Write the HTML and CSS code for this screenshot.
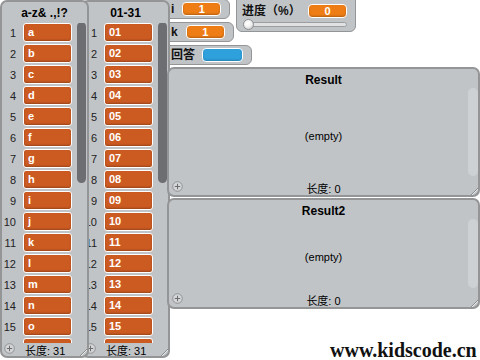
FILE: index.html
```html
<!DOCTYPE html>
<html lang="zh">
<head>
<meta charset="utf-8">
<title>Stage</title>
<link rel="stylesheet" href="styles.css">
</head>
<body>
<div class="stage">

  <div class="vars">
    <div class="var v-i"><span class="vlabel">i</span><span class="vval orange">1</span></div>
    <div class="var v-k"><span class="vlabel">k</span><span class="vval orange">1</span></div>
    <div class="var v-ans"><span class="vlabel">回答</span><span class="vval blue"></span></div>
  </div>

  <div class="slider-mon">
    <div class="slider-top"><span class="vlabel">进度（%）</span><span class="vval orange">0</span></div>
    <div class="track"><span class="knob"></span></div>
  </div>

  <div class="list l2">
    <div class="list-title">01-31</div>
    <div class="list-body">
      <div class="rows">
        <div class="row"><span class="idx">1</span><span class="item">01</span></div>
        <div class="row"><span class="idx">2</span><span class="item">02</span></div>
        <div class="row"><span class="idx">3</span><span class="item">03</span></div>
        <div class="row"><span class="idx">4</span><span class="item">04</span></div>
        <div class="row"><span class="idx">5</span><span class="item">05</span></div>
        <div class="row"><span class="idx">6</span><span class="item">06</span></div>
        <div class="row"><span class="idx">7</span><span class="item">07</span></div>
        <div class="row"><span class="idx">8</span><span class="item">08</span></div>
        <div class="row"><span class="idx">9</span><span class="item">09</span></div>
        <div class="row"><span class="idx">10</span><span class="item">10</span></div>
        <div class="row"><span class="idx">11</span><span class="item">11</span></div>
        <div class="row"><span class="idx">12</span><span class="item">12</span></div>
        <div class="row"><span class="idx">13</span><span class="item">13</span></div>
        <div class="row"><span class="idx">14</span><span class="item">14</span></div>
        <div class="row"><span class="idx">15</span><span class="item">15</span></div>
        <div class="row"><span class="idx"></span><span class="item"></span></div>
      </div>
      <div class="scroll dark"></div>
    </div>
    <div class="list-foot">
      <span class="add"><svg width="11" height="11" viewBox="0 0 11 11"><circle cx="5.5" cy="5.5" r="4.8" fill="#d3d5d7" stroke="#8f9193" stroke-width="1"/><path d="M5.5 2.8v5.4M2.8 5.5h5.4" stroke="#6a6c6e" stroke-width="1"/></svg></span>
      <span class="len">长度: 31</span>
      <span class="grip"><svg width="10" height="10" viewBox="0 0 10 10"><path d="M10 1L1 10M10 5L5 10M10 8L8 10" stroke="#8a8c8e" stroke-width="1"/><path d="M10 2L2 10M10 6L6 10" stroke="#e8e9ea" stroke-width="1"/></svg></span>
    </div>
  </div>

  <div class="list l1">
    <div class="list-title">a-z&amp; .,!?</div>
    <div class="list-body">
      <div class="rows">
        <div class="row"><span class="idx">1</span><span class="item">a</span></div>
        <div class="row"><span class="idx">2</span><span class="item">b</span></div>
        <div class="row"><span class="idx">3</span><span class="item">c</span></div>
        <div class="row"><span class="idx">4</span><span class="item">d</span></div>
        <div class="row"><span class="idx">5</span><span class="item">e</span></div>
        <div class="row"><span class="idx">6</span><span class="item">f</span></div>
        <div class="row"><span class="idx">7</span><span class="item">g</span></div>
        <div class="row"><span class="idx">8</span><span class="item">h</span></div>
        <div class="row"><span class="idx">9</span><span class="item">i</span></div>
        <div class="row"><span class="idx">10</span><span class="item">j</span></div>
        <div class="row"><span class="idx">11</span><span class="item">k</span></div>
        <div class="row"><span class="idx">12</span><span class="item">l</span></div>
        <div class="row"><span class="idx">13</span><span class="item">m</span></div>
        <div class="row"><span class="idx">14</span><span class="item">n</span></div>
        <div class="row"><span class="idx">15</span><span class="item">o</span></div>
        <div class="row"><span class="idx"></span><span class="item"></span></div>
      </div>
      <div class="scroll dark"></div>
    </div>
    <div class="list-foot">
      <span class="add"><svg width="11" height="11" viewBox="0 0 11 11"><circle cx="5.5" cy="5.5" r="4.8" fill="#d3d5d7" stroke="#8f9193" stroke-width="1"/><path d="M5.5 2.8v5.4M2.8 5.5h5.4" stroke="#6a6c6e" stroke-width="1"/></svg></span>
      <span class="len">长度: 31</span>
      <span class="grip"><svg width="10" height="10" viewBox="0 0 10 10"><path d="M10 1L1 10M10 5L5 10M10 8L8 10" stroke="#8a8c8e" stroke-width="1"/><path d="M10 2L2 10M10 6L6 10" stroke="#e8e9ea" stroke-width="1"/></svg></span>
    </div>
  </div>

  <div class="list rlist r1">
    <div class="list-title rtitle">Result</div>
    <div class="rbody">
      <div class="empty">(empty)</div>
      <div class="scroll light"></div>
    </div>
    <div class="list-foot rfoot">
      <span class="add"><svg width="11" height="11" viewBox="0 0 11 11"><circle cx="5.5" cy="5.5" r="4.8" fill="#d3d5d7" stroke="#8f9193" stroke-width="1"/><path d="M5.5 2.8v5.4M2.8 5.5h5.4" stroke="#6a6c6e" stroke-width="1"/></svg></span>
      <span class="len">长度: 0</span>
      <span class="grip"><svg width="10" height="10" viewBox="0 0 10 10"><path d="M10 1L1 10M10 5L5 10M10 8L8 10" stroke="#8a8c8e" stroke-width="1"/><path d="M10 2L2 10M10 6L6 10" stroke="#e8e9ea" stroke-width="1"/></svg></span>
    </div>
  </div>

  <div class="list rlist r2">
    <div class="list-title rtitle">Result2</div>
    <div class="rbody">
      <div class="empty">(empty)</div>
      <div class="scroll light"></div>
    </div>
    <div class="list-foot rfoot">
      <span class="add"><svg width="11" height="11" viewBox="0 0 11 11"><circle cx="5.5" cy="5.5" r="4.8" fill="#d3d5d7" stroke="#8f9193" stroke-width="1"/><path d="M5.5 2.8v5.4M2.8 5.5h5.4" stroke="#6a6c6e" stroke-width="1"/></svg></span>
      <span class="len">长度: 0</span>
      <span class="grip"><svg width="10" height="10" viewBox="0 0 10 10"><path d="M10 1L1 10M10 5L5 10M10 8L8 10" stroke="#8a8c8e" stroke-width="1"/><path d="M10 2L2 10M10 6L6 10" stroke="#e8e9ea" stroke-width="1"/></svg></span>
    </div>
  </div>

  <div class="watermark">www.kidscode.cn</div>
</div>
</body>
</html>
```

FILE: styles.css
```css
* { box-sizing: border-box; }
html, body { margin: 0; padding: 0; background: #ffffff; }
body {
  font-family: "Liberation Sans", Arial, "Noto Sans CJK SC", sans-serif;
  color: #000;
}
.stage {
  position: relative;
  width: 480px;
  height: 360px;
  overflow: hidden;
  background: #ffffff;
}

/* ---------- variable monitors ---------- */
.vars {
  position: absolute;
  left: 160px;
  top: 0;
  display: flex;
  flex-direction: column;
  align-items: flex-start;
  gap: 3px;
  z-index: 1;
}
.var {
  display: flex;
  align-items: center;
  height: 20px;
  padding: 0 8px 0 10px;
  background: #c1c4c7;
  border: 1px solid #949596;
  border-radius: 0 6px 6px 0;
}
.v-i { margin-top: -1px; }
.vlabel {
  font-family: "Liberation Sans", Arial, "Noto Sans CJK SC", sans-serif;
  font-weight: bold;
  font-size: 12px;
  line-height: 14px;
  color: #111;
}
.v-i .vlabel { margin-right: 8px; }
.v-k .vlabel { margin-right: 8px; }
.v-ans .vlabel { margin-right: 7px; }
.vval {
  display: block;
  width: 39px;
  height: 14px;
  border: 1px solid #ffffff;
  border-radius: 4px;
  color: #fff;
  font-weight: bold;
  font-size: 11px;
  line-height: 12px;
  text-align: center;
}
.orange { background: #ee7d16; box-shadow: inset 0 -1px 2px rgba(0,0,0,0.25); }
.blue { background: #2ea0dc; width: 41px; box-shadow: inset 0 -1px 2px rgba(0,0,0,0.2); }

.slider-mon {
  position: absolute;
  left: 236px;
  top: -1px;
  width: 120px;
  height: 33px;
  padding: 4px 8px 0 5px;
  background: #c1c4c7;
  border: 1px solid #949596;
  border-radius: 0 0 6px 6px;
  display: flex;
  flex-direction: column;
  gap: 4px;
  z-index: 1;
}
.slider-top {
  display: flex;
  align-items: center;
  justify-content: space-between;
}
.track {
  position: relative;
  height: 5px;
  margin: 0 0 0 2px;
  background: #dfe1e3;
  border: 1px solid #9c9ea0;
  border-radius: 3px;
}
.knob {
  position: absolute;
  left: -2px;
  top: -4px;
  width: 11px;
  height: 11px;
  border-radius: 50%;
  border: 1px solid #8d8f91;
  background: radial-gradient(circle at 40% 35%, #ffffff 0%, #f2f2f2 45%, #b9bbbd 100%);
}

/* ---------- list monitors ---------- */
.list {
  position: absolute;
  display: flex;
  flex-direction: column;
  background: #c1c4c7;
  border: 2px solid #949596;
  border-radius: 7px;
  overflow: hidden;
}
.l1 { left: 0; top: 0; width: 89px; height: 358px; z-index: 4; }
.l2 { left: 81px; top: 0; width: 89px; height: 358px; z-index: 2; }

.list-title {
  height: 21px;
  line-height: 22px;
  text-align: center;
  font-weight: bold;
  font-size: 12px;
  flex: none;
}
.list-body {
  flex: 1;
  display: flex;
  overflow: hidden;
  min-height: 0;
}
.rows {
  display: flex;
  flex-direction: column;
  gap: 2px;
}
.row {
  display: flex;
  align-items: center;
  height: 19px;
  flex: none;
}
.idx {
  width: 14px;
  text-align: right;
  font-size: 11px;
  color: #222;
  margin-right: 7px;
  white-space: nowrap;
  direction: rtl;
}
.item {
  width: 49px;
  height: 19px;
  padding-left: 4px;
  background: #cc5b22;
  border: 1px solid #ffffff;
  border-radius: 3px;
  color: #ffffff;
  font-weight: bold;
  font-size: 11px;
  line-height: 17px;
  box-shadow: inset 0 -1px 2px rgba(0,0,0,0.25);
}
.scroll {
  flex: none;
  border-radius: 5px;
}
.dark {
  width: 9px;
  height: 161px;
  margin: -1px 0 0 5px;
  background: #6c6e71;
}

.list-foot {
  flex: none;
  height: 13px;
  display: flex;
  align-items: center;
  position: relative;
}
.add {
  display: flex;
  margin-left: 2px;
  margin-top: -2px;
}
.add svg { display: block; }
.len {
  font-size: 11px;
  margin-left: 10px;
  font-family: "Liberation Sans", Arial, "Noto Sans CJK SC", sans-serif;
}
.grip {
  position: absolute;
  right: -1px;
  bottom: -1px;
  display: flex;
}
.grip svg { display: block; }

/* ---------- Result lists ---------- */
.rlist { z-index: 3; }
.r1 { left: 167px; top: 67px; width: 313px; height: 130px; }
.r2 { left: 167px; top: 198px; width: 313px; height: 111px; }
.rtitle { height: 22px; line-height: 22px; }
.rbody {
  flex: 1;
  display: flex;
  align-items: stretch;
  min-height: 0;
}
.empty {
  flex: 1;
  display: flex;
  align-items: center;
  justify-content: center;
  font-size: 11px;
  padding-left: 10px;
}
.light {
  width: 10px;
  margin-top: -3px;
  margin-bottom: 4px;
  background: #ced1d3;
}
.rfoot {
  height: 15px;
  justify-content: center;
}
.rfoot .add {
  position: absolute;
  left: 3px;
  top: 1px;
  margin: 0;
}
.rfoot .len { margin-left: 0; }

/* ---------- watermark ---------- */
.watermark {
  position: absolute;
  left: 330px;
  top: 341px;
  font-family: "Liberation Serif", "Times New Roman", serif;
  font-weight: bold;
  font-size: 20px;
  line-height: 19px;
  height: 19px;
  color: #111;
  z-index: 5;
  white-space: nowrap;
}
```
